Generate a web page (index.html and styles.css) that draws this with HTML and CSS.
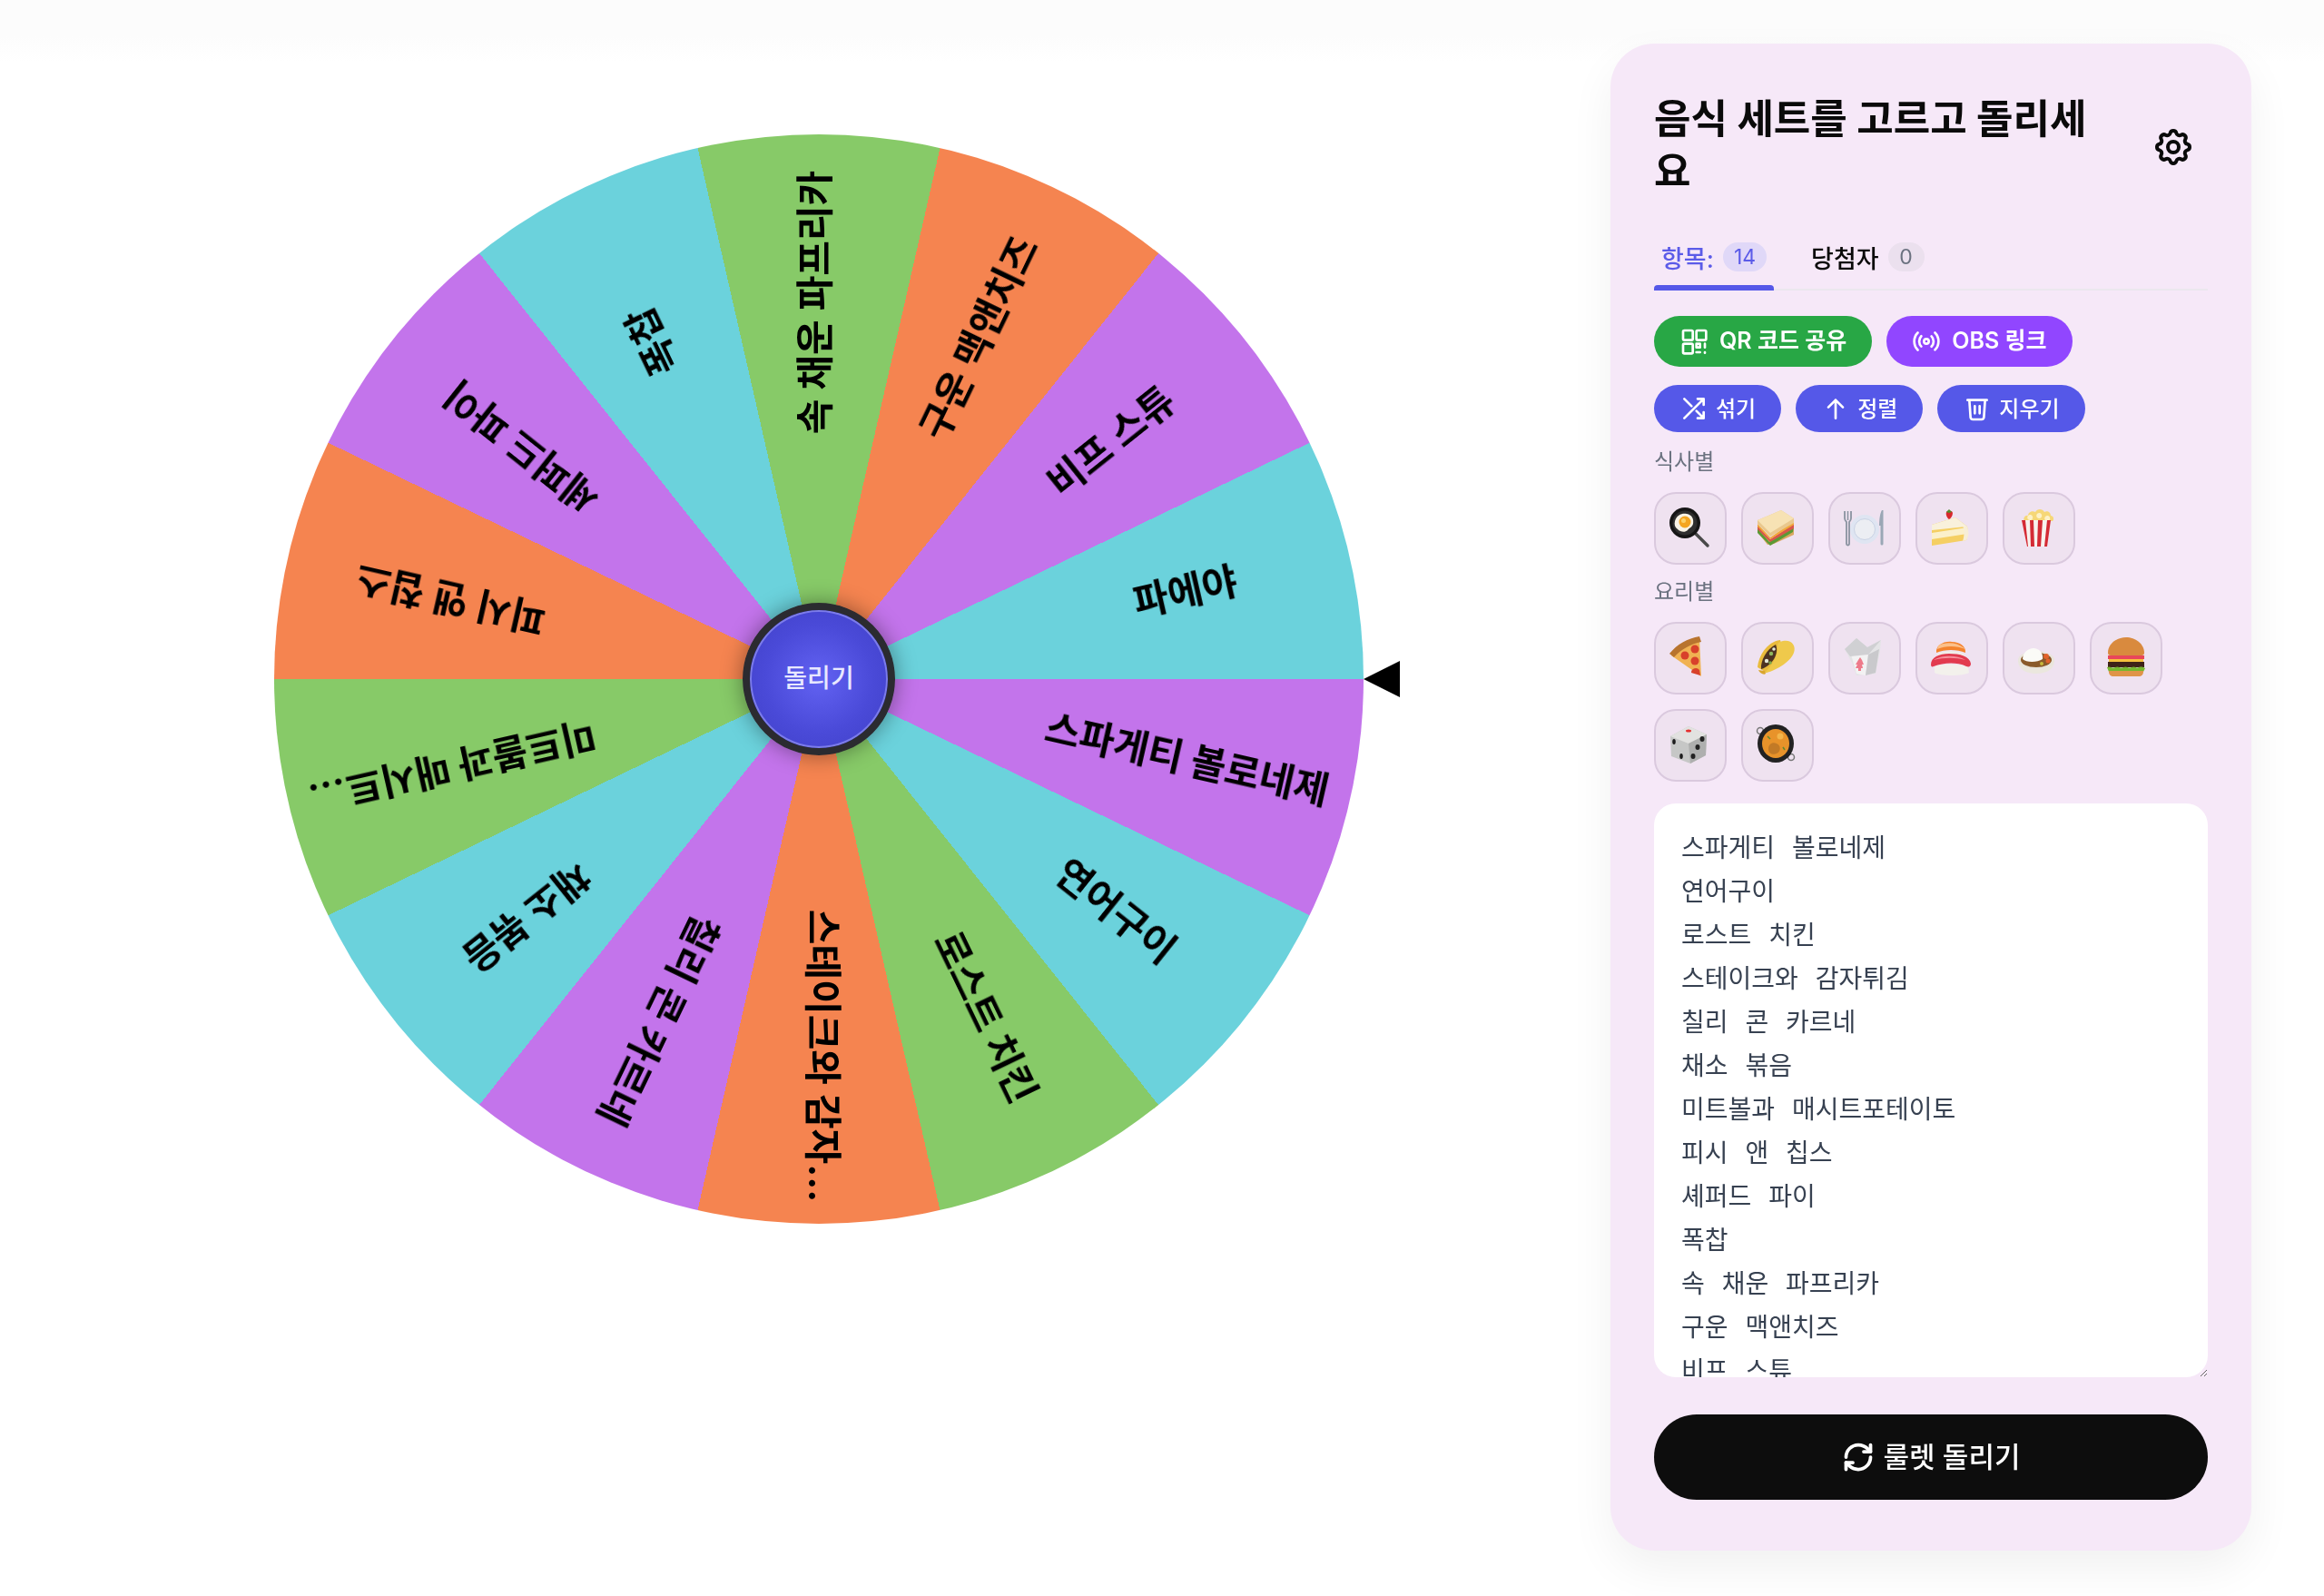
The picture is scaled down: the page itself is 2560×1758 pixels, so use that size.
FILE: index.html
```html
<!DOCTYPE html>
<html lang="ko">
<head>
    <meta charset="UTF-8">
    <meta name="viewport" content="width=device-width, initial-scale=1.0">
    <title>음식 룰렛</title>
    <link rel="stylesheet" href="styles.css">
</head>
<body>

<div class="page">
    <div class="stage">
        <div class="wheel">
            <svg class="wheel-labels" viewBox="-600 -600 1200 1200" width="1200" height="1200">
                <text transform="rotate(12.857) translate(415 -5)">스파게티 볼로네제</text>
                <text transform="rotate(38.571) translate(415 -5)">연어구이</text>
                <text transform="rotate(64.286) translate(415 -5)">로스트 치킨</text>
                <text transform="rotate(90) translate(415 -5)">스테이크와 감자...</text>
                <text transform="rotate(115.714) translate(415 -5)">칠리 콘 카르네</text>
                <text transform="rotate(141.429) translate(415 -5)">채소 볶음</text>
                <text transform="rotate(167.143) translate(415 -5)">미트볼과 매시트...</text>
                <text transform="rotate(192.857) translate(415 -5)">피시 앤 칩스</text>
                <text transform="rotate(218.571) translate(415 -5)">셰퍼드 파이</text>
                <text transform="rotate(244.286) translate(415 -5)">폭찹</text>
                <text transform="rotate(270) translate(415 -5)">속 채운 파프리카</text>
                <text transform="rotate(295.714) translate(415 -5)">구운 맥앤치즈</text>
                <text transform="rotate(321.429) translate(415 -5)">비프 스튜</text>
                <text transform="rotate(347.143) translate(415 -5)">파에야</text>
            </svg>
            <button class="hub">돌리기</button>
            <div class="pointer"></div>
        </div>
    </div>

    <aside class="panel">
        <div class="panel-head">
            <h1>음식 세트를 고르고 돌리세요</h1>
            <button class="gear" aria-label="설정">
                <svg viewBox="0 0 24 24" width="48" height="48" class="line-icon">
                    <path d="M10.325 4.317c.426-1.756 2.924-1.756 3.35 0a1.724 1.724 0 0 0 2.573 1.066c1.543-.94 3.31.826 2.37 2.37a1.724 1.724 0 0 0 1.065 2.572c1.756.426 1.756 2.924 0 3.35a1.724 1.724 0 0 0-1.066 2.573c.94 1.543-.826 3.31-2.37 2.37a1.724 1.724 0 0 0-2.572 1.065c-.426 1.756-2.924 1.756-3.35 0a1.724 1.724 0 0 0-2.573-1.066c-1.543.94-3.31-.826-2.37-2.37a1.724 1.724 0 0 0-1.065-2.572c-1.756-.426-1.756-2.924 0-3.35a1.724 1.724 0 0 0 1.066-2.573c-.94-1.543.826-3.31 2.37-2.37 1 .608 2.296.07 2.572-1.065z"/>
                    <circle cx="12" cy="12" r="3"/>
                </svg>
            </button>
        </div>

        <div class="tabs">
            <div class="tab active">항목: <span class="count">14</span></div>
            <div class="tab">당첨자 <span class="count">0</span></div>
        </div>

        <div class="btn-row share-row">
            <button class="btn btn-green">
                <svg viewBox="0 0 24 24" width="32" height="32" class="line-icon">
                    <rect x="3" y="3" width="8" height="8" rx="1"/><rect x="14" y="3" width="8" height="8" rx="1"/><rect x="3" y="14" width="8" height="8" rx="1"/>
                    <path d="M14 14h3v3h-3z M21 14v3 M14 21h3 M21 21v.5"/>
                </svg>
                <span>QR 코드 공유</span>
            </button>
            <button class="btn btn-purple">
                <svg viewBox="0 0 24 24" width="32" height="32" class="line-icon">
                    <path d="M4.9 19.1C1 15.2 1 8.8 4.9 4.9"/><path d="M7.8 16.2c-2.3-2.3-2.3-6.1 0-8.5"/><circle cx="12" cy="12" r="2"/><path d="M16.2 7.8c2.3 2.3 2.3 6.1 0 8.5"/><path d="M19.1 4.9C23 8.8 23 15.1 19.1 19"/>
                </svg>
                <span>OBS 링크</span>
            </button>
        </div>

        <div class="btn-row tool-row">
            <button class="btn btn-blue">
                <svg viewBox="0 0 24 24" width="32" height="32" class="line-icon">
                    <path d="M20 4h-5 M20 4v5 M20 4L4 20 M20 20h-5 M20 20v-5 M20 20l-6-6 M4 4l6 6"/>
                </svg>
                <span>섞기</span>
            </button>
            <button class="btn btn-blue">
                <svg viewBox="0 0 24 24" width="32" height="32" class="line-icon">
                    <path d="M12 20V5 M6 11l6-6 6 6"/>
                </svg>
                <span>정렬</span>
            </button>
            <button class="btn btn-blue">
                <svg viewBox="0 0 24 24" width="32" height="32" class="line-icon">
                    <path d="M4 5h16 M5.5 5l1 14.500a2 2 0 0 0 2 1.500h7a2 2 0 0 0 2-1.500l1-14.500 M10 10v6 M14 10v6"/>
                </svg>
                <span>지우기</span>
            </button>
        </div>

        <div class="set-label">식사별</div>
        <div class="emoji-row">
            <button class="emoji" aria-label="아침">
                <svg viewBox="0 0 48 48" width="48" height="48">
                    <path d="M28 28l15 15" stroke="#4a4a4a" stroke-width="3.500" stroke-linecap="round"/>
                    <circle cx="18" cy="18" r="17" fill="#151515"/><circle cx="18" cy="18" r="13.500" fill="#2e2e2e"/>
                    <path d="M7 16c2-7 8-9 13-8 6 1 8 6 7 11-1 4-4 4-6 7-3 3-8 2-11-1-3-2-4-5-3-9z" fill="#f8f3e6"/>
                    <circle cx="18" cy="17" r="6.500" fill="#f4a521"/><circle cx="16.500" cy="15.500" r="2.500" fill="#fbd26a"/>
                </svg>
            </button>
            <button class="emoji" aria-label="점심">
                <svg viewBox="0 0 48 48" width="48" height="48">
                    <path d="M2 21l14 17 26-15v8L20 41l-7 1-11-14z" fill="#d9a860"/>
                    <path d="M2 24l13 15 27-17-1 6-25 15-14-14z" fill="#5b9a35"/>
                    <path d="M2 21l14 15 26-17v5L16 39 2 25z" fill="#d8574a"/>
                    <path d="M2 19l14 15 26-18v4L16 36 2 22z" fill="#f2a83a"/>
                    <path d="M2 15L28 4l14 9v5L16 33 2 19z" fill="#e9c88e"/>
                    <path d="M2 15L28 4l14 9-26 16z" fill="#f7e2b4"/>
                </svg>
            </button>
            <button class="emoji" aria-label="저녁">
                <svg viewBox="0 0 48 48" width="48" height="48">
                    <circle cx="24" cy="25" r="16" fill="#dfe5f2"/><circle cx="24" cy="25" r="11.500" fill="#eceef3" stroke="#c9d2e4"/>
                    <path d="M2 5v8c0 2 1 3 2 4v24a1.500 1.500 0 0 0 3 0V17c1-1 2-2 2-4V5" fill="none" stroke="#8a93a0" stroke-width="1.800"/>
                    <path d="M5.500 5v10" stroke="#8a93a0" stroke-width="1.500"/>
                    <path d="M43 4c-2 3-3 10-3 17h1.500v20a1.500 1.500 0 0 0 3 0V4z" fill="#9aa7b5"/>
                </svg>
            </button>
            <button class="emoji" aria-label="디저트">
                <svg viewBox="0 0 48 48" width="48" height="48">
                    <path d="M2 20v23l38-6c2-4 2-10 1-15L28 12z" fill="#f5cf63"/>
                    <path d="M2 29l39-6v7L2 36z" fill="#fbf0cb"/>
                    <path d="M28 12l13 10c2 6 2 11-1 15l-4 1c2-6 2-13 0-17z" fill="#f7eed6"/>
                    <path d="M2 20l26-8 12 10-38 4z" fill="#f9f1dc"/>
                    <path d="M18 6c2-2 6-2 7 1 0 3-2 6-4 7-2-1-4-5-3-8z" fill="#d8282c"/>
                    <path d="M18 6l3-3 3 3-3 1z" fill="#4f8f2f"/>
                </svg>
            </button>
            <button class="emoji" aria-label="간식">
                <svg viewBox="0 0 48 48" width="48" height="48">
                    <path d="M8 16c-2-3 1-7 4-6 0-4 5-6 8-4 2-4 8-4 10 0 3-2 7 0 7 4 3 0 4 4 2 6z" fill="#f6d777"/>
                    <path d="M14 9a3 3 0 1 0 1 .1zM24 7a3 3 0 1 0 1 .1zM33 10a3 3 0 1 0 1 .1z" fill="#fdf1c7"/>
                    <path d="M5 15h32l-4 29H11z" fill="#f7f2ee"/>
                    <path d="M5 15h4l3 29h-1zM14 15h4l1 29h-4zM23 15h5l-2 29h-4zM33 15h4l-4 29h-3z" fill="#d42a35"/>
                </svg>
            </button>
        </div>

        <div class="set-label cuisine-label">요리별</div>
        <div class="emoji-row">
            <button class="emoji" aria-label="피자">
                <svg viewBox="0 0 48 48" width="48" height="48">
                    <path d="M3 21L34 2l2 42z" fill="#f0b252"/>
                    <path d="M1 19C9 9 21 2 34 0l2 6C25 8 14 14 6 23z" fill="#b8742e"/>
                    <circle cx="18" cy="21" r="4.500" fill="#d8412b"/><circle cx="29" cy="14" r="4.500" fill="#d8412b"/><circle cx="29" cy="27" r="4.500" fill="#d8412b"/><path d="M25 40a5 5 0 0 1 9-3l1 6z" fill="#d8412b"/>
                </svg>
            </button>
            <button class="emoji" aria-label="타코">
                <svg viewBox="0 0 48 48" width="48" height="48">
                    <path d="M2 34C3 22 12 6 27 4l3 11L12 40z" fill="#e9bb3c"/>
                    <path d="M6 36c-1-9 6-22 16-27 4 9-3 23-16 27z" fill="#4d3322"/>
                    <circle cx="12" cy="27" r="2.200" fill="#e4e9d8"/><circle cx="17" cy="19" r="2.200" fill="#8fb85e"/><circle cx="16" cy="29" r="1.800" fill="#7aa84c"/><circle cx="20" cy="14" r="1.800" fill="#e4e9d8"/>
                    <path d="M9 41c12-3 29-12 33-23 3-8-3-15-12-13-5 1-6 3-6 6 1 11-7 22-15 30z" fill="#efc94b"/>
                    <path d="M3 37c1 3 6 6 8 4l-1-3c-3 0-5-1-7-1z" fill="#d9a62e"/>
                </svg>
            </button>
            <button class="emoji" aria-label="중식">
                <svg viewBox="0 0 48 48" width="48" height="48">
                    <path d="M2 14L15 2l12 10 15-8-1 12-5 25-21 2-5-14z" fill="#e4e4e6"/>
                    <path d="M8 16l20 4-3 23-10-2z" fill="#f3f2f3"/>
                    <path d="M28 20l12-6-4 26-11 3z" fill="#c9c9cc"/>
                    <path d="M2 14l6 8 20-2 14-16-15 8L15 2z" fill="#d0d0d3"/>
                    <path d="M17 26l2-3 2 3 2 5h-2l1 4h-2v3h-3v-3h-3l2-4h-2z" fill="#ee7a8a"/>
                </svg>
            </button>
            <button class="emoji" aria-label="일식">
                <svg viewBox="0 0 48 48" width="48" height="48">
                    <path d="M8 20c5-5 24-5 30 0l1 5-31 0z" fill="#f0eee8"/>
                    <path d="M7 18c-1-8 8-13 17-12 9 0 16 5 15 12-9-4-23-4-32 0z" fill="#f4832d"/>
                    <path d="M9 10c8-4 20-4 29 3l1 1c-10-4-22-4-31 0z" fill="#fbc08a"/>
                    <path d="M5 33c6-3 30-3 37 1l1 6c-6 4-32 4-38 0z" fill="#f3f1ec"/>
                    <path d="M1 31c0-8 9-12 20-12 12 0 23 3 24 11 0 3-2 4-5 3-11-5-25-4-36 0-2 1-3 0-3-2z" fill="#e23b4f"/>
                    <path d="M4 26c8-5 25-6 35 0-11-3-23-3-35 0z" fill="#f6909b"/>
                </svg>
            </button>
            <button class="emoji" aria-label="카레">
                <svg viewBox="0 0 48 48" width="48" height="48">
                    <path d="M1 27c0 9 9 14 20 14s20-5 20-14z" fill="#ebe7de"/>
                    <ellipse cx="21" cy="26" rx="20" ry="10" fill="#e9e5dc"/>
                    <ellipse cx="21" cy="26" rx="17" ry="8" fill="#8a5a2a"/>
                    <path d="M6 25c0-7 6-12 12-12s11 5 10 12c-6 4-18 4-22 0z" fill="#fbfbf7"/>
                    <circle cx="32" cy="22" r="3" fill="#e2622a"/><circle cx="27" cy="30" r="2" fill="#c8b93a"/><circle cx="34" cy="27" r="2.500" fill="#e2622a"/>
                </svg>
            </button>
            <button class="emoji" aria-label="햄버거">
                <svg viewBox="0 0 48 48" width="48" height="48">
                    <path d="M4 18C4 8 14 1 24 1s20 7 20 17c0 2-1 3-3 3H7c-2 0-3-1-3-3z" fill="#d98a3e"/>
                    <path d="M4 21h40v4H4z" fill="#e8475a"/>
                    <path d="M5 25h38v3H5z" fill="#f6c23d"/>
                    <path d="M4 28h40v6H4z" fill="#3e2318"/>
                    <path d="M3 34c4-2 5 2 9 0 4-2 5 2 9 0 4-2 5 2 9 0 4-2 5 2 8 0 3-1 5 0 7 1l-2 4H5z" fill="#76b82f"/>
                    <path d="M5 38h38v1c0 3-2 5-5 5H10c-3 0-5-2-5-5z" fill="#df9448"/>
                </svg>
            </button>
            <button class="emoji" aria-label="랜덤">
                <svg viewBox="0 0 48 48" width="48" height="48">
                    <path d="M2 14L22 3l20 9-1 23-17 9-21-8z" fill="#c6c7c6"/>
                    <path d="M2 14l20 8 20-10-20-9z" fill="#e2e2e0"/>
                    <path d="M22 22l20-10-1 23-17 9z" fill="#aeafae"/>
                    <ellipse cx="22" cy="8" rx="3" ry="1.500" fill="#e53030"/>
                    <ellipse cx="6" cy="20" rx="1.800" ry="3" fill="#1d1d1d"/><ellipse cx="14" cy="36" rx="1.800" ry="3" fill="#1d1d1d"/>
                    <ellipse cx="37" cy="17" rx="2.500" ry="3" fill="#222"/><ellipse cx="32" cy="26" rx="2.500" ry="3" fill="#222"/><ellipse cx="27" cy="36" rx="2.500" ry="3" fill="#222"/>
                </svg>
            </button>
            <button class="emoji" aria-label="파에야">
                <svg viewBox="0 0 48 48" width="48" height="48">
                    <circle cx="5" cy="8" r="3.500" fill="none" stroke="#777" stroke-width="1.500"/><circle cx="39" cy="37" r="3.500" fill="none" stroke="#777" stroke-width="1.500"/>
                    <ellipse cx="22" cy="22" rx="20" ry="21" fill="#222"/>
                    <ellipse cx="22" cy="22" rx="15" ry="16" fill="#e8932a"/>
                    <path d="M14 28c0-6 5-8 9-6 5 2 5 9 0 11-4 2-9 0-9-5z" fill="#c27a26"/>
                    <circle cx="27" cy="14" r="3.500" fill="#f3b54a"/><path d="M13 14l3 3M30 26l2 3" stroke="#5e8a30" stroke-width="1.500"/>
                </svg>
            </button>
        </div>

        <textarea class="items" spellcheck="false">스파게티 볼로네제
연어구이
로스트 치킨
스테이크와 감자튀김
칠리 콘 카르네
채소 볶음
미트볼과 매시트포테이토
피시 앤 칩스
셰퍼드 파이
폭찹
속 채운 파프리카
구운 맥앤치즈
비프 스튜
파에야</textarea>

        <button class="spin">
            <svg viewBox="0 0 24 24" width="36" height="36" class="line-icon">
                <path d="M3 12a9 9 0 0 1 9-9 9.750 9.750 0 0 1 6.740 2.740L21 8"/><path d="M21 3v5h-5"/><path d="M21 12a9 9 0 0 1-9 9 9.750 9.750 0 0 1-6.740-2.740L3 16"/><path d="M8 16H3v5"/>
            </svg>
            <span>룰렛 돌리기</span>
        </button>
    </aside>
</div>

</body>
</html>
```

FILE: styles.css
```css
* {
    box-sizing: border-box;
}
body {
    margin: 0;
    background: linear-gradient(#fcfcfc 0, #fcfcfc 40px, #ffffff 68px);
    color: #0a0a0a;
    font-family: Inter, 'Noto Sans CJK KR', sans-serif;
}
button {
    font-family: inherit;
    border: none;
    cursor: pointer;
}
.page {
    display: flex;
    min-height: 1758px;
}
.line-icon {
    fill: none;
    stroke: currentColor;
    stroke-width: 2;
    stroke-linecap: round;
    stroke-linejoin: round;
    flex-shrink: 0;
}

/* wheel */
.stage {
    width: 1774px;
    padding: 148px 0 0 302px;
}
.wheel {
    position: relative;
    width: 1200px;
    height: 1200px;
    border-radius: 50%;
    background: conic-gradient(from 90deg,
        #c374eb 0 25.714deg, #6bd2dc 0 51.429deg, #87ca68 0 77.143deg, #f58450 0 102.857deg,
        #c374eb 0 128.571deg, #6bd2dc 0 154.286deg, #87ca68 0 180deg, #f58450 0 205.714deg,
        #c374eb 0 231.429deg, #6bd2dc 0 257.143deg, #87ca68 0 282.857deg, #f58450 0 308.571deg,
        #c374eb 0 334.286deg, #6bd2dc 0 360deg);
}
.wheel-labels {
    display: block;
    overflow: visible;
}
.wheel-labels text {
    font-size: 42px;
    font-weight: 700;
    fill: #000000;
    text-anchor: middle;
    dominant-baseline: central;
    filter: blur(0.4px);
}
.hub {
    position: absolute;
    left: 516px;
    top: 516px;
    width: 168px;
    height: 168px;
    padding: 0 0 6px;
    border-radius: 50%;
    border: 8px solid #2b2b30;
    background: radial-gradient(circle, #6262f2 0%, #4a4ad8 55%, #3f3fc6 100%);
    box-shadow: 0 0 24px rgba(0, 0, 0, 0.4), inset 0 0 0 2px #7c7cea;
    color: #e8e8ff;
    font-size: 28px;
    font-weight: 500;
}
.pointer {
    position: absolute;
    left: 1200px;
    top: 580px;
    width: 0;
    height: 0;
    border-top: 20px solid transparent;
    border-bottom: 20px solid transparent;
    border-right: 40px solid #000000;
}

/* panel */
.panel {
    width: 706px;
    height: 1660px;
    margin-top: 48px;
    padding: 54px 48px 56px;
    background: #f6e8f8;
    border-radius: 48px;
    box-shadow: 0 20px 50px rgba(0, 0, 0, 0.06);
}
.panel-head {
    display: flex;
    align-items: center;
    justify-content: space-between;
}
.panel-head h1 {
    width: 510px;
    margin: 0;
    font-size: 44px;
    font-weight: 700;
    line-height: 58px;
}
.gear {
    display: flex;
    padding: 16px;
    margin: 4px -2px 0 0;
    background: none;
    color: #0a0a0a;
}
.tabs {
    display: flex;
    gap: 33px;
    margin-top: 44px;
    border-bottom: 2px solid #ebe7ee;
}
.tab {
    position: relative;
    display: flex;
    align-items: center;
    gap: 10px;
    height: 56px;
    padding: 0 8px 14px;
    font-size: 27px;
    font-weight: 500;
}
.tab.active {
    color: #5b5be8;
}
.tab.active::after {
    content: '';
    position: absolute;
    left: 0;
    right: 0;
    bottom: -2px;
    height: 6px;
    background: #5558e8;
    border-radius: 4px 4px 0 0;
}
.count {
    min-width: 40px;
    height: 32px;
    padding: 0 12px;
    border-radius: 16px;
    background: #ebe0ee;
    color: #6b7280;
    font-size: 23px;
    font-weight: 400;
    line-height: 32px;
    text-align: center;
}
.tab.active .count {
    background: #e0d8f8;
    color: #5b5be8;
}
.btn-row {
    display: flex;
    gap: 16px;
}
.share-row {
    margin-top: 28px;
}
.tool-row {
    margin-top: 20px;
}
.btn {
    display: flex;
    align-items: center;
    gap: 8px;
    padding: 0 28px;
    border-radius: 28px;
    color: #ffffff;
    font-size: 24px;
    font-weight: 500;
}
.btn span {
    margin-bottom: 3px;
}
.share-row .btn {
    gap: 12px;
    height: 56px;
    font-size: 25px;
    font-weight: 600;
}
.share-row .btn span {
    margin-bottom: 6px;
}
.tool-row .btn {
    height: 52px;
}
.btn-green {
    background: #28a745;
}
.btn-purple {
    background: #9146ff;
}
.btn-blue {
    background: #5558e8;
}
.set-label {
    margin: 17px 0;
    color: #6b7280;
    font-size: 24px;
    line-height: 32px;
}
.cuisine-label {
    margin-top: 14px;
}
.emoji-row {
    display: flex;
    flex-wrap: wrap;
    gap: 16px;
}
.emoji {
    display: flex;
    align-items: center;
    justify-content: center;
    width: 80px;
    height: 80px;
    padding: 0;
    border: 2px solid #dac9de;
    border-radius: 24px;
    background: #efe2f0;
}
.items {
    display: block;
    width: 100%;
    height: 632px;
    margin-top: 24px;
    padding: 25px 30px;
    border: none;
    border-radius: 24px;
    background: #ffffff;
    color: #374151;
    font-family: inherit;
    font-size: 28px;
    line-height: 48px;
    word-spacing: 11px;
    scrollbar-width: none;
    outline: none;
}
.spin {
    display: flex;
    align-items: center;
    justify-content: center;
    gap: 10px;
    width: 100%;
    height: 94px;
    margin-top: 41px;
    border-radius: 47px;
    background: #0d0d0d;
    color: #ffffff;
    font-size: 31px;
    font-weight: 500;
}
.spin span {
    margin-bottom: 6px;
}
.spin .line-icon {
    stroke-width: 2.5;
}
```
